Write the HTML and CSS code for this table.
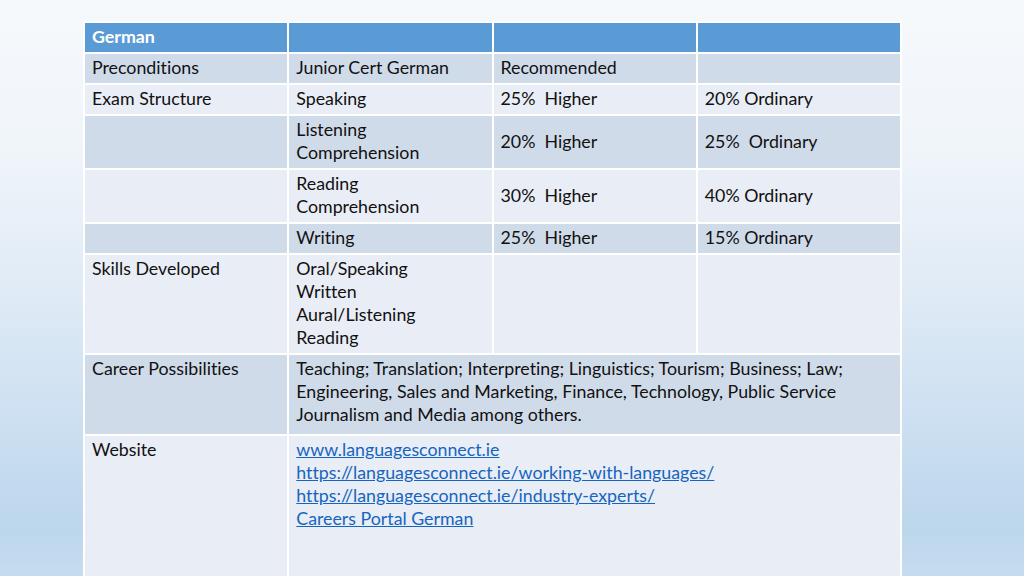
FILE: index.html
```html
<!DOCTYPE html>
<html lang="en">
<head>
<meta charset="utf-8">
<title>German</title>
<link rel="stylesheet" href="styles.css">
</head>
<body>
<div class="slide">
  <table class="grid">
    <colgroup>
      <col class="c1"><col class="c2"><col class="c3"><col class="c4">
    </colgroup>
    <tr class="head h31"><th>German</th><th></th><th></th><th></th></tr>
    <tr class="dark h31"><td>Preconditions</td><td>Junior Cert German</td><td>Recommended</td><td></td></tr>
    <tr class="light h31"><td>Exam Structure</td><td>Speaking</td><td>25%&nbsp; Higher</td><td>20% Ordinary</td></tr>
    <tr class="dark h53"><td></td><td>Listening<br>Comprehension</td><td class="mid">20%&nbsp; Higher</td><td class="mid">25%&nbsp; Ordinary</td></tr>
    <tr class="light h54"><td></td><td>Reading<br>Comprehension</td><td class="mid">30%&nbsp; Higher</td><td class="mid">40% Ordinary</td></tr>
    <tr class="dark h31"><td></td><td>Writing</td><td>25%&nbsp; Higher</td><td>15% Ordinary</td></tr>
    <tr class="light h100"><td>Skills Developed</td><td>Oral/Speaking<br>Written<br>Aural/Listening<br>Reading</td><td></td><td></td></tr>
    <tr class="dark h81"><td>Career Possibilities</td><td colspan="3">Teaching; Translation; Interpreting; Linguistics; Tourism; Business; Law;<br>Engineering, Sales and Marketing, Finance, Technology, Public Service<br>Journalism and Media among others.</td></tr>
    <tr class="light h160"><td>Website</td><td colspan="3"><a href="#">www.languagesconnect.ie</a><br><a href="#">https://languagesconnect.ie/working-with-languages/</a><br><a href="#">https://languagesconnect.ie/industry-experts/</a><br><a href="#">Careers Portal German</a></td></tr>
  </table>
</div>
</body>
</html>
```
FILE: styles.css
```css
html, body {
  margin: 0;
  padding: 0;
  width: 1024px;
  height: 576px;
  overflow: hidden;
}
.slide {
  width: 1024px;
  height: 576px;
  overflow: hidden;
  background: linear-gradient(to bottom, #f6f9fc 0%, #f0f5fa 25%, #e0ebf6 50%, #c8ddf0 78%, #bcd6ec 92%, #c6ddf0 100%);
  padding: 21px 0 0 83px;
  box-sizing: border-box;
  font-family: "Lato", "Liberation Sans", sans-serif;
  font-size: 17.8px;
  font-variant-ligatures: none;
  color: #111;
}
.grid {
  border-collapse: collapse;
  table-layout: fixed;
  width: 819px;
}
.c1, .c2, .c3, .c4 { width: 25%; }
.grid th, .grid td {
  border: 2px solid #ffffff;
  padding: 2px 7px 4px 7px;
  line-height: 23px;
  vertical-align: top;
  text-align: left;
  overflow: hidden;
  white-space: nowrap;
}
.grid td.mid { vertical-align: middle; }
.head th {
  background: #5b9bd5;
  color: #ffffff;
  font-weight: 700;
}
.dark td { background: #d0dbea; }
.light td { background: #e9edf6; }
.h31 { height: 31px; }
.h53 { height: 53px; }
.h54 { height: 54px; }
.h100 { height: 100px; }
.h81 { height: 81px; }
.h160 { height: 160px; }
a {
  color: #1565c0;
  text-decoration: underline;
}
```
